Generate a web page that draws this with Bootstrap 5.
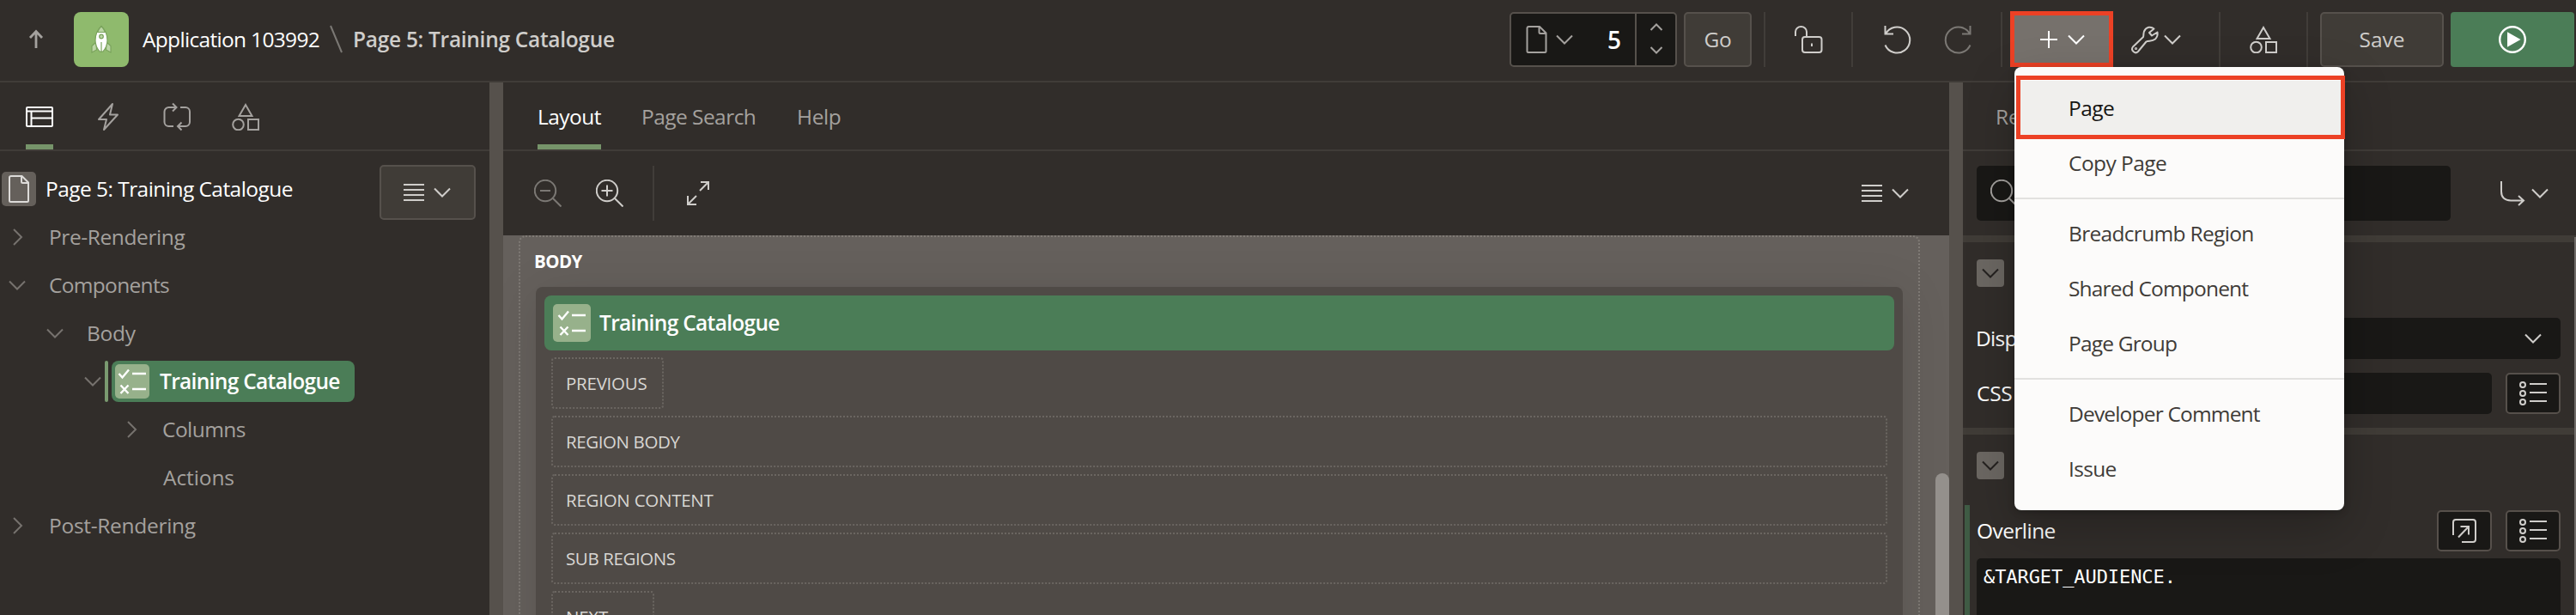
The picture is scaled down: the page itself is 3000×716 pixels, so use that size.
<!DOCTYPE html>
<html lang="en" data-bs-theme="dark">
<head>
<meta charset="utf-8">
<title>Page Designer</title>
<link href="https://cdn.jsdelivr.net/npm/bootstrap@5.3.0/dist/css/bootstrap.min.css" rel="stylesheet">
<style>
body{width:3000px;height:716px;overflow:hidden;background:#312d2a;color:#cfcdca;font:450 24.5px/32px "Open Sans","Noto Sans",sans-serif;white-space:nowrap}
svg{display:block;flex:none;fill:none;stroke:currentColor;stroke-width:2;overflow:visible}
.dim{color:#a4a19e}.faint{color:#7b7874}.bright{color:#fff}
.topbar{height:96px;padding:14px 2px 0 26px;border-bottom:2px solid #403c38}
.topbar .cell{height:64px;display:flex;align-items:center;flex:none}
.app-tile{width:64px;border-radius:8px;background:#8fba6d;margin:0 16px 0 28px;justify-content:center}
.rule{width:2px;height:64px;background:#413d39;flex:none}
.tool{background:#403c37;border:2px solid #56514c;border-radius:5px;justify-content:center;font-weight:500}
.pager{width:195px;background:#191816;border:2px solid #56514c;border-radius:5px}
.spin{width:47px;height:60px;border-left:2px solid #56514c;padding:11px 0 13px}
.add{width:120px;height:65px;margin:-1px 0 0 9px;background:#76716c;border:5px solid #ec4125;position:relative;z-index:5}
.menu-pop{position:absolute;left:0;top:60px;width:384px;height:516px;padding:16px 0;margin:0;border:0;border-radius:8px;background:#fcfbfa;box-shadow:0 20px 56px rgba(0,0,0,.22),0 2px 8px rgba(0,0,0,.2);font-size:24.5px;display:block}
.menu-pop .dropdown-item{height:64px;padding:16px 0 0 63px;color:#403c38;line-height:32px;font-weight:450}
.menu-pop .dropdown-item.picked{position:relative;background:#f0efed;color:#161513}
.picked::after{content:"";position:absolute;left:2px;right:-1px;top:-6px;bottom:-4px;border:5px solid #ec4125;background:transparent}
.menu-pop .dropdown-divider{margin:8px 0;border-top:2px solid #e2e1df;opacity:1}
.work{height:620px}
.split{width:16px;background:#56514c;flex:none}
.tabs{height:80px;border-bottom:2px solid #403c38}
.tabs>*{height:78px;display:flex;align-items:center;padding-top:2px}
.tabs .on{box-shadow:inset 0 -6px #76946a;color:#fff}
.tree{padding-top:16px}
.trow{height:56px;display:flex;align-items:center}
.page-ico{width:40px;height:40px;border-radius:5px;background:#65605b;margin:0 11px 0 2px}
.ico{display:flex;align-items:center;justify-content:center;flex:none}
.twist{width:32px;margin-left:4px;display:flex;justify-content:center;color:#76726e}
.mark-bar{width:4px;height:48px;background:#7a9a70;border-radius:2px;margin-left:2px}
.pill{width:283px;height:48px;border-radius:8px;background:#4b7d57;margin-left:4px;padding-left:4px;color:#fff;font-weight:600}
.check-ico{background:#97b18b;border-radius:5px;color:#fff;flex:none}
.lbtn{position:absolute;left:442px;top:192px;width:112px;height:64px}
.tbar{height:98px;padding:18px 46px 18px 36px}
.canvas{height:444px;background:#65605c;padding:0 34px 0 18px;overflow:hidden;position:relative}
.zone{height:560px;border:2px dotted #7f7a75;border-radius:8px;padding:12px 18px 0 18px}
.zone-t{font-size:20.5px;font-weight:700;color:#fff;line-height:32px;margin-left:-2px}
.region{margin-top:14px;height:460px;background:#4f4a46;border-radius:8px;padding:10px;box-shadow:0 8px 56px rgba(0,0,0,.12)}
.rhead{height:64px;background:#4b7d57;border-radius:8px;padding-left:10px;color:#fff;font-weight:600}
.slot{height:60px;margin:8px;border:2px dotted #6b6661;border-radius:4px;font-size:20.5px;line-height:56px;padding-left:15px;color:#d8d6d3}
.thumb{position:absolute;right:0;top:277px;width:16px;height:300px;border-radius:8px;background:#94908c}
.props{width:714px;position:relative}
.find{width:552px;height:64px;background:#191816;border-radius:5px;padding-left:16px}
.band{height:8px;background:#403c37}
.fold{width:32px;height:32px;border-radius:4px;background:#6b6762;color:#24211f}
.field{height:48px;background:#191816;border-radius:5px}
.sq{width:64px;height:48px;border:2px solid #56504b;border-radius:5px;background:#191816;margin-left:16px}
.lbl{color:#fff;font-weight:500}
.changed{height:128px;padding:6px 18px 0 8px;border-left:6px solid #3f5b44;margin-left:2px}
.code{height:90px;background:#191816;border-radius:5px;padding:6px 8px;font:22px/32px "DejaVu Sans Mono",monospace;letter-spacing:-.08px;color:#fff;margin-top:8px}
.sliver{position:absolute;right:0;top:180px;width:2px;height:450px;background:#6f6b68}
.k0{letter-spacing:-.1px}.k1{letter-spacing:-.3px}.k2{letter-spacing:-.4px}.k3{letter-spacing:-.55px}.k4{letter-spacing:-.68px}.k5{letter-spacing:-.82px}.k6{letter-spacing:-.25px}
</style>
</head>
<body>
<svg width="0" height="0" class="position-absolute">
<symbol id="down" viewBox="0 0 22 12"><path d="M2 1.5 11 10.5 20 1.5"/></symbol>
<symbol id="doc" viewBox="0 0 24 32"><path d="M3 1h12.500L23 8.500V29.500q0 1.500-1.500 1.500H2.500Q1 31 1 29.500V2.500Q1 1 3 1ZM15 1.500V7.500q0 1.500 1.500 1.500H23"/></symbol>
<symbol id="shapes" viewBox="0 0 32 32"><path d="M16 2 8.500 15h15zM19 19h12v12H19z"/><circle cx="7.500" cy="25" r="6.300"/></symbol>
<symbol id="lines" viewBox="0 0 24 20"><path d="M0 1h24M0 7h24M0 13h24M0 19h24"/></symbol>
<symbol id="checks" viewBox="0 0 40 40"><path stroke-width="2.400" d="m4.500 11 4 4.500 7.500-9M20 11h16M6.500 24.500l9 9.500M15.500 24.500l-9 9.500M20 29h16"/></symbol>
<symbol id="list" viewBox="0 0 32 28"><path d="M12 3h20M12 13h20M12 23h20"/><circle cx="4" cy="4" r="3"/><circle cx="4" cy="14" r="3"/><circle cx="4" cy="24" r="3"/></symbol>
<symbol id="lens" viewBox="0 0 32 32"><circle cx="13" cy="13" r="12.200"/><path d="m22 22 9.500 9.500"/></symbol>
</svg>

<header class="topbar d-flex align-items-start">
  <div class="cell dim"><svg width="32" height="32"><path stroke-width="2.800" d="M16 26V6.500M9 14l7-7.500 7 7.500"/></svg></div>
  <div class="cell app-tile"><svg width="24" height="32">
    <g stroke-width="1.200"><path d="M6 19 1 23.500V31l5.500-3zM18 19l5 4.500V31l-5.500-3z" fill="#bcd6a6" stroke="#7aa35c"/>
    <path d="M12 .5C8 4 5 10 5 17c0 6 2.500 10 5 13h4c2.500-3 5-7 5-13C19 10 16 4 12 .5z" fill="#fff" stroke="#7aa35c"/>
    <path d="M12 .5C10 2.500 8.500 5 7.500 7.500h9C15.500 5 14 2.500 12 .5z" fill="#bcd6a6" stroke="#7aa35c"/>
    <circle cx="12" cy="12.500" r="2.300" fill="#bcd6a6" stroke="#7aa35c"/><path d="M12 19v12" stroke="#7aa35c"/></g></svg></div>
  <div class="cell bright k4">Application 103992</div>
  <div class="cell faint ms-2 me-2 ps-1 pe-1"><svg width="15" height="32"><path d="m1 0 13 31"/></svg></div>
  <div class="cell k1" style="font-weight:650">Page 5: Training Catalogue</div>

  <div class="d-flex align-items-start ms-auto">
    <div class="cell pager">
      <svg class="dim" width="25" height="32" style="margin-left:17px"><use href="#doc"/></svg>
      <svg class="dim" width="22" height="12" style="margin-left:9px"><use href="#down"/></svg>
      <span class="bright fw-semibold flex-fill text-end pe-3" style="font-size:28px">5</span>
      <div class="spin dim d-flex flex-column align-items-center justify-content-between ms-auto">
        <svg width="16" height="9"><path d="m1.500 8 6.500-6.500L14.500 8"/></svg><svg width="16" height="9"><path d="m1.500 1 6.500 6.500L14.500 1"/></svg></div>
    </div>
    <div class="cell tool k2 ms-2" style="width:79px">Go</div>
    <div class="rule" style="margin:0 34px 0 14px"></div>
    <div class="cell"><svg width="32" height="32"><path d="M1 12V7a6.500 6 0 0 1 13 0v6M20 20.500v3.500"/><rect x="9" y="13" width="22.500" height="18" rx="3"/></svg></div>
    <div class="rule" style="margin:0 36px 0 34px"></div>
    <div class="cell"><svg width="32" height="32"><path d="M1.500 0v9.500H11M2 9.500A15 15 0 1 1 1.500 22.500"/></svg></div>
    <div class="cell faint" style="margin-left:38px"><svg width="32" height="32"><path d="M30.500 0v9.500H21M30 9.500A15 15 0 1 0 30.500 22.500"/></svg></div>
    <div class="rule" style="margin-left:34px"></div>
    <div class="add dropdown d-flex align-items-center bright">
      <svg width="20" height="20" style="margin-left:30px"><path d="M0 10h20M10 0v20"/></svg>
      <svg width="22" height="12" style="margin-left:11px"><use href="#down"/></svg>
      <div class="dropdown-menu show menu-pop">
        <a class="dropdown-item picked k3">Page</a>
        <a class="dropdown-item k3">Copy Page</a>
        <hr class="dropdown-divider">
        <a class="dropdown-item k4">Breadcrumb Region</a>
        <a class="dropdown-item k5">Shared Component</a>
        <a class="dropdown-item k5">Page Group</a>
        <hr class="dropdown-divider">
        <a class="dropdown-item k5">Developer Comment</a>
        <a class="dropdown-item k4">Issue</a>
      </div>
    </div>
    <div class="cell" style="margin-left:21px"><svg width="32" height="32"><path stroke-linejoin="round" d="M26.500 3.500C23 .5 17.500 1 15 6.500c-1 3-.3 4-1 6.500L2 24.500c-3 4 2.500 9 6 5.500L17.500 18.500c2.500-1.500 7 0 10.500-3 2.500-2.500 3-5 2.500-8L24 11.500l-3-3.500z"/><circle cx="5.500" cy="26.500" r=".6"/></svg>
      <svg width="22" height="12" style="margin-left:5px"><use href="#down"/></svg></div>
    <div class="rule" style="margin:0 34px 0 43px"></div>
    <div class="cell"><svg width="32" height="32"><use href="#shapes"/></svg></div>
    <div class="rule" style="margin:0 14px 0 34px"></div>
    <div class="cell tool" style="width:144px">Save</div>
    <div class="cell ms-2 justify-content-center bright rounded-1" style="width:144px;background:#4b7d57"><svg width="32" height="32"><circle cx="16" cy="16" r="14.800" stroke-width="2.400"/><path d="M11 9v14l12.500-7z" fill="currentColor"/></svg></div>
  </div>
</header>

<main class="work d-flex">
  <section style="width:570px" class="flex-shrink-0">
    <div class="tabs dim d-flex">
      <div class="on" style="margin-left:30px"><svg width="32" height="24"><rect x="1" y="1" width="30" height="22" rx="1"/><path d="M1 5.500h30M6.500 5.500V23M6.500 13.500H31"/></svg></div>
      <div style="margin-left:52px"><svg width="24" height="32"><path d="M17 1 1 19h9L7 31 23 13.500h-9z" stroke-linejoin="round"/></svg></div>
      <div style="margin-left:52px"><svg width="32" height="32"><path d="M12 27H6.500a5 5 0 0 1-5-5V10a5 5 0 0 1 5-5H15M11 .5 15.500 5 11 9.500M20 5h6a5 5 0 0 1 5 5v12a5 5 0 0 1-5 5h-9M21.500 22.500 17 27l4.500 4.500"/></svg></div>
      <div style="margin-left:48px"><svg width="32" height="32"><use href="#shapes"/></svg></div>
    </div>
    <div class="tree dim">
      <div class="trow"><div class="ico page-ico text-white"><svg width="24" height="32" style="color:#dddbd9"><use href="#doc"/></svg></div><span class="lbl k3">Page 5: Training Catalogue</span></div>
      <div class="trow"><span class="twist"><svg width="11" height="20"><path d="m1 1 9 9-9 9"/></svg></span><span class="k2" style="margin-left:21px">Pre-Rendering</span></div>
      <div class="trow"><span class="twist"><svg width="22" height="12"><use href="#down"/></svg></span><span class="k4" style="margin-left:21px">Components</span></div>
      <div class="trow" style="padding-left:44px"><span class="twist"><svg width="22" height="12"><use href="#down"/></svg></span><span class="k1" style="margin-left:21px">Body</span></div>
      <div class="trow" style="padding-left:88px"><span class="twist" style="margin-right:-4px"><svg width="22" height="12"><use href="#down"/></svg></span><i class="mark-bar"></i>
        <div class="pill d-flex align-items-center"><svg class="check-ico" width="40" height="40"><use href="#checks"/></svg><span class="k4" style="margin-left:12px">Training Catalogue</span></div></div>
      <div class="trow" style="padding-left:133px"><span class="twist"><svg width="11" height="20"><path d="m1 1 9 9-9 9"/></svg></span><span class="k3" style="margin-left:20px">Columns</span></div>
      <div class="trow" style="padding-left:190px"><span class="k0">Actions</span></div>
      <div class="trow"><span class="twist"><svg width="11" height="20"><path d="m1 1 9 9-9 9"/></svg></span><span class="k1" style="margin-left:21px">Post-Rendering</span></div>
    </div>
    <div class="lbtn tool ico"><svg width="24" height="20"><use href="#lines"/></svg><svg width="22" height="12" style="margin-left:10px"><use href="#down"/></svg></div>
  </section>
  <div class="split"></div>

  <section class="flex-fill" style="min-width:0">
    <div class="tabs dim d-flex">
      <div class="on k3" style="margin-left:40px;width:74px">Layout</div>
      <div class="k3" style="margin-left:47px;width:132px">Page Search</div>
      <div class="k2" style="margin-left:49px">Help</div>
    </div>
    <div class="tbar d-flex align-items-center">
      <svg class="faint" width="32" height="32"><use href="#lens"/><path d="M7 13h12"/></svg>
      <svg width="32" height="32" style="margin-left:40px"><use href="#lens"/><path d="M6.500 13h13M13 6.500v13"/></svg>
      <div class="rule" style="margin:0 38px 0 34px"></div>
      <svg width="26" height="28"><path d="m2 26 9-9M1 17v10h10M15 11l9-9M16 1h9v9"/></svg>
      <svg class="ms-auto" width="24" height="20"><use href="#lines"/></svg><svg width="22" height="12" style="margin-left:10px"><use href="#down"/></svg>
    </div>
    <div class="canvas">
      <div class="zone">
        <div class="zone-t k3">BODY</div>
        <div class="region">
          <div class="rhead d-flex align-items-center"><svg class="check-ico" width="44" height="44" viewBox="-2 -2 44 44"><use href="#checks" width="40" height="40"/></svg><span class="k4" style="margin-left:10px">Training Catalogue</span></div>
          <div class="slot k6" style="width:131px">PREVIOUS</div>
          <div class="slot k2">REGION BODY</div>
          <div class="slot k6">REGION CONTENT</div>
          <div class="slot k2">SUB REGIONS</div>
          <div class="slot k6" style="width:120px">NEXT</div>
        </div>
      </div>
      <div class="thumb"></div>
    </div>
  </section>
  <div class="split"></div>

  <aside class="props flex-shrink-0">
    <div class="tabs dim d-flex"><div style="margin-left:38px">Region</div></div>
    <div class="d-flex align-items-center" style="height:98px;padding-left:16px">
      <div class="find d-flex align-items-center dim"><svg width="32" height="32"><use href="#lens"/></svg></div>
      <svg width="30" height="28" style="margin-left:57px"><path d="M2 0v12q0 10 11 10.500h15M22 17l6 5.500-6 5.500" /></svg>
      <svg width="22" height="12" style="margin-left:6px"><use href="#down"/></svg>
    </div>
    <div class="band"></div>
    <div style="height:216px;padding:20px 18px 0 16px">
      <div class="fold ico"><svg width="22" height="12"><use href="#down"/></svg></div>
      <div class="d-flex align-items-center" style="margin-top:36px"><span class="lbl k4" style="width:184px;margin-left:-1px">Display Point</span><div class="field flex-fill d-flex align-items-center justify-content-end" style="padding-right:21px"><svg width="22" height="12"><use href="#down"/></svg></div></div>
      <div class="d-flex align-items-center" style="margin-top:16px"><span class="lbl k1" style="width:184px">CSS Classes</span><div class="field flex-fill"></div><div class="sq ico"><svg width="32" height="28"><use href="#list"/></svg></div></div>
    </div>
    <div class="band"></div>
    <div style="height:82px;padding:20px 16px"><div class="fold ico"><svg width="22" height="12"><use href="#down"/></svg></div></div>
    <div class="changed">
      <div class="d-flex align-items-center"><span class="lbl k3 flex-fill">Overline</span>
        <div class="sq ico"><svg width="28" height="28"><path d="M1 19V4q0-3 3-3h20q3 0 3 3v20q0 3-3 3H11M7 21.500 19 9M9.500 9H19v9.500"/></svg></div>
        <div class="sq ico"><svg width="32" height="28"><use href="#list"/></svg></div></div>
      <div class="code">&amp;TARGET_AUDIENCE.</div>
    </div>
    <div class="sliver"></div>
  </aside>
</main>
<script src="https://cdn.jsdelivr.net/npm/bootstrap@5.3.0/dist/js/bootstrap.bundle.min.js"></script>
</body>
</html>
